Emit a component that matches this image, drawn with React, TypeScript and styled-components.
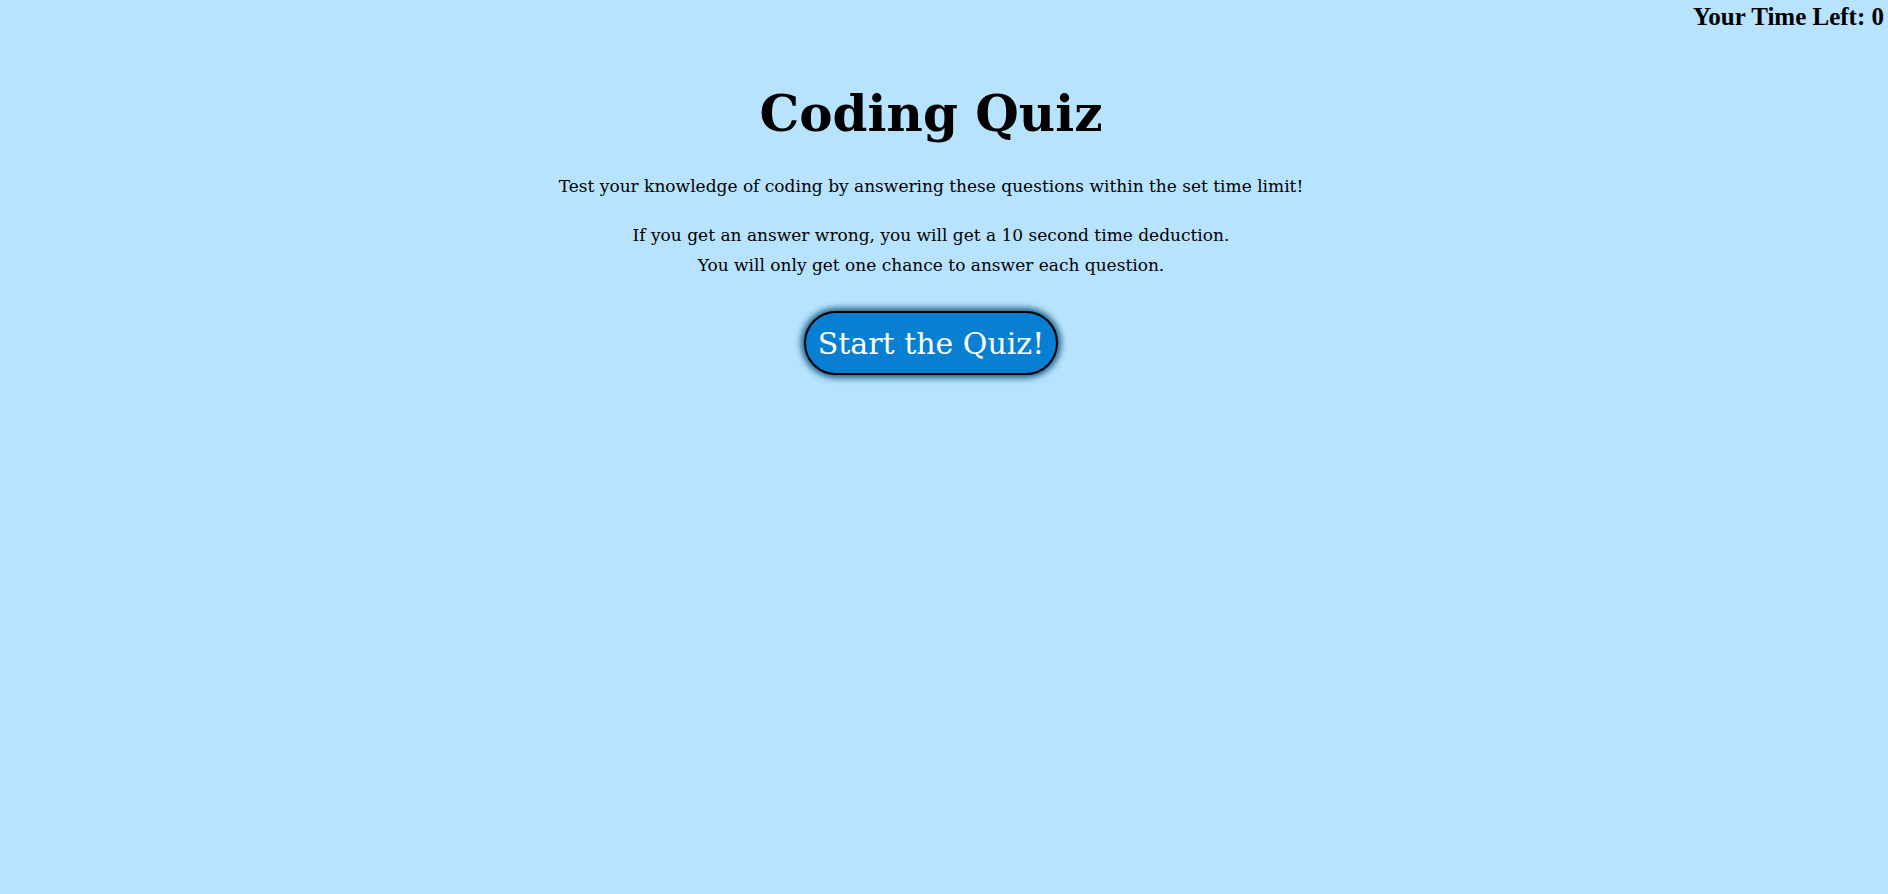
import React from "react";
import styled, { createGlobalStyle } from "styled-components";

const Global = createGlobalStyle`
  html, body { margin: 0; padding: 0; }
  body {
    background: #b7e3fe;
    font-family: "DejaVu Serif", Georgia, serif;
    color: #000;
  }
`;

const Page = styled.div`
  min-height: 894px;
  display: flex;
  flex-direction: column;
`;

const Header = styled.header`
  display: flex;
  justify-content: flex-end;
  padding: 3px 4px 0 0;
`;

const Timer = styled.div`
  font-family: "Liberation Serif", "Times New Roman", serif;
  font-weight: bold;
  font-size: 25px;
  line-height: 27px;
`;

const Main = styled.main`
  display: flex;
  flex-direction: column;
  align-items: center;
  text-align: center;
  padding: 54px 26px 0 0;
`;

const Title = styled.h1`
  font-size: 50px;
  font-weight: bold;
  margin: 0 0 27px;
  line-height: 1.2;
`;

const Text = styled.p`
  font-size: 17px;
  line-height: 30px;
  margin: 0 0 19px;
`;

const StartButton = styled.button`
  margin-top: 12px;
  font-family: "DejaVu Serif", Georgia, serif;
  font-size: 30px;
  color: #fff;
  background: #0780d3;
  border: 2px solid #000;
  border-radius: 32px;
  height: 64px;
  padding: 0 12px;
  box-shadow: 0 0 6px 3px #1a5f86;
  cursor: pointer;
`;

export default function App() {
  return (
    <Page>
      <Global />
      <Header>
        <Timer>Your Time Left: 0</Timer>
      </Header>
      <Main>
        <Title>Coding Quiz</Title>
        <Text>Test your knowledge of coding by answering these questions within the set time limit!</Text>
        <Text>
          If you get an answer wrong, you will get a 10 second time deduction.
          <br />
          You will only get one chance to answer each question.
        </Text>
        <StartButton>Start the Quiz!</StartButton>
      </Main>
    </Page>
  );
}
